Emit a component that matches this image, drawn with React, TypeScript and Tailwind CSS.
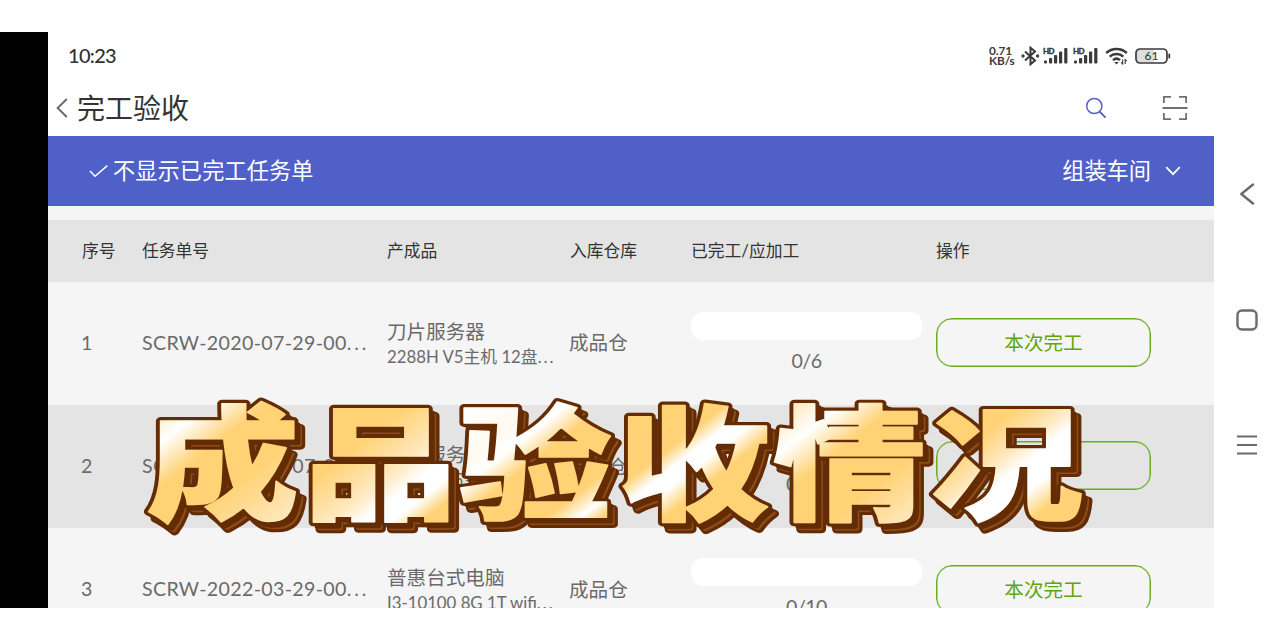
type Task = {
  id: number;
  code: string;
  product: string;
  spec: string;
  warehouse: string;
  progress: string;
};

const COLUMNS = ["序号", "任务单号", "产成品", "入库仓库", "已完工/应加工", "操作"];

const TASKS: Task[] = [
  {
    id: 1,
    code: "SCRW-2020-07-29-00",
    product: "刀片服务器",
    spec: "2288H V5主机 12盘",
    warehouse: "成品仓",
    progress: "0/6",
  },
  {
    id: 2,
    code: "SCRW-2022-01-07-00",
    product: "刀片服务器",
    spec: "2288H V5主机 12盘",
    warehouse: "成品仓",
    progress: "0/10",
  },
  {
    id: 3,
    code: "SCRW-2022-03-29-00",
    product: "普惠台式电脑",
    spec: "I3-10100 8G 1T wifi",
    warehouse: "成品仓",
    progress: "0/10",
  },
];

const GOLD = "#ffd275";
const PALE = "#ffe9c0";
const WHITE = "#ffffff";

type Glyph = { char: string; x: number; stops: [number, string][] };

const CAPTION: Glyph[] = [
  { char: "成", x: 146, stops: [[0.05, PALE], [0.2, WHITE], [0.4, GOLD], [0.65, GOLD], [1, PALE]] },
  { char: "品", x: 304, stops: [[0, GOLD], [0.35, GOLD], [0.6, PALE], [0.72, WHITE], [0.82, WHITE], [0.93, GOLD]] },
  { char: "验", x: 459, stops: [[0, WHITE], [0.25, "#fffaf0"], [0.36, WHITE], [0.5, GOLD], [0.8, GOLD], [0.92, WHITE], [1, GOLD]] },
  { char: "收", x: 617, stops: [[0, GOLD], [0.36, GOLD], [0.46, WHITE], [0.54, WHITE], [0.66, GOLD], [1, GOLD]] },
  { char: "情", x: 773, stops: [[0.05, PALE], [0.22, WHITE], [0.42, GOLD], [0.7, GOLD], [1, PALE]] },
  { char: "况", x: 930, stops: [[0, GOLD], [0.3, GOLD], [0.48, PALE], [0.58, WHITE], [0.72, WHITE], [0.86, GOLD]] },
];

const GRID =
  "grid grid-cols-[60px_245px_183px_121px_245px_216px] items-center pl-[34px]";

function Signal() {
  return (
    <svg width="26" height="18" viewBox="0 0 26 18" fill="#3a3a3a">
      <text x="0" y="7" fontSize="8" fontWeight="900" stroke="#3a3a3a" strokeWidth="0.3" textLength="11.5">
        HD
      </text>
      <rect x="1" y="13.5" width="3" height="3" rx="1" />
      <rect x="6" y="11" width="3.2" height="5.5" rx="1" />
      <rect x="11" y="8" width="3.2" height="8.5" rx="1" />
      <rect x="16" y="4.5" width="3.2" height="12" rx="1" />
      <rect x="21.2" y="1" width="3.2" height="15.5" rx="1" />
    </svg>
  );
}

function StatusBar() {
  return (
    <div className="flex h-12 items-center justify-between pl-5 pr-[43px]">
      <span className="pb-[2px] text-[20px] font-medium tracking-[-0.7px] text-[#333]">10:23</span>
      <div className="flex items-center text-[#3a3a3a]">
        <div className="w-8 text-[11.8px] font-bold leading-[10px] tracking-[-0.1px]">
          <div>0.71</div>
          <div>KB/s</div>
        </div>
        <svg width="19" height="20" viewBox="0 0 19 20" fill="none" stroke="currentColor" strokeWidth="2">
          <path d="M4 5.5 14 14.5 9.5 18.3V1.7L14 5.5 4 14.5" />
          <circle cx="2" cy="10" r="0.7" />
          <circle cx="16.6" cy="10" r="0.7" />
        </svg>
        <div className="ml-[3px] flex gap-1">
          <Signal />
          <Signal />
        </div>
        <svg className="ml-[6px]" width="24" height="18" viewBox="0 0 24 18" fill="none" stroke="currentColor" strokeWidth="2.5">
          <path d="M1.2 6a15 15 0 0 1 20.6 0" />
          <path d="M4.7 9.7a10 10 0 0 1 13.6 0" />
          <path d="M8 13.1a5.4 5.4 0 0 1 7 0" />
          <path d="m9.2 15 2.3 2.4 2.3-2.4Z" fill="currentColor" stroke="none" />
          <path d="M17.7 12.5v4.5l-1.6-1.6M20.2 17v-4.5l1.6 1.6" strokeWidth="1.1" />
        </svg>
        <svg className="ml-[6px]" width="36" height="16" viewBox="0 0 36 16" fill="none">
          <path d="M5 2h14v12H5a3 3 0 0 1-3-3V5a3 3 0 0 1 3-3Z" fill="#dedede" />
          <rect x="1" y="1" width="31" height="14" rx="4" stroke="currentColor" strokeWidth="1.7" />
          <rect x="33.4" y="5.5" width="1.8" height="5" rx="0.9" fill="currentColor" />
          <text x="16.5" y="12.2" textAnchor="middle" fontSize="12" fontWeight="500" fill="currentColor">
            61
          </text>
        </svg>
      </div>
    </div>
  );
}

function TitleBar() {
  return (
    <div className="flex h-14 items-center pl-2 pr-[26px]">
      <svg width="12" height="20" viewBox="0 0 12 20" fill="none" stroke="#666" strokeWidth="1.8">
        <path d="M10.8 1 1.6 10l9.2 9" />
      </svg>
      <h1 className="ml-[9px] text-[28px] leading-none text-[#333]">完工验收</h1>
      <svg className="ml-auto" width="22" height="22" viewBox="0 0 22 22" fill="none" stroke="#5661c4">
        <circle cx="9.3" cy="9" r="7.6" strokeWidth="1.5" />
        <path d="m14.6 14.6 6 6" strokeWidth="2" />
      </svg>
      <svg className="ml-[55px]" width="26" height="26" viewBox="0 0 26 26" fill="none" stroke="#707070" strokeWidth="1.8">
        <path d="M1.9 8V1.9H9M17 1.9h7.1V8M1.9 18v6.1H9M17 24.1h7.1V18M.5 13h25" />
      </svg>
    </div>
  );
}

function FilterBar() {
  return (
    <div className="flex h-[70px] items-center bg-[#4f60c9] pl-[41px] pr-[33px] text-[22.2px] leading-none text-white">
      <svg width="20" height="14" viewBox="0 0 20 14" fill="none" stroke="currentColor" strokeWidth="1.5">
        <path d="m1 7 5 5.2L18.3 1.6" />
      </svg>
      <span className="ml-1 tracking-[0.1px]">不显示已完工任务单</span>
      <span className="ml-auto">组装车间</span>
      <svg className="ml-[14px]" width="16" height="10" viewBox="0 0 16 10" fill="none" stroke="currentColor" strokeWidth="1.8">
        <path d="m1.2 1.2 6.8 7 6.8-7" />
      </svg>
    </div>
  );
}

function TaskRow({ task }: { task: Task }) {
  return (
    <div
      className={`${GRID} h-[123.2px] shrink-0 text-[19.6px] text-[#6a6a6a] even:bg-[#f5f5f5] odd:bg-[#e4e4e4]`}
    >
      <span className="-ml-px pb-px">{task.id}</span>
      <span className="whitespace-nowrap pb-px tracking-[0.35px]">
        {task.code}
        <span className="tracking-[2.8px]">...</span>
      </span>
      <div className="whitespace-nowrap pt-px">
        <div className="leading-[26px]">{task.product}</div>
        <div className="text-[16.8px] leading-6">
          {task.spec}
          <span className="tracking-[2px]">...</span>
        </div>
      </div>
      <span className="-ml-px">{task.warehouse}</span>
      <div className="w-[231px] text-center">
        <div className="h-7 rounded-xl bg-white" />
        <div className="mt-[7px] leading-7 tracking-[-0.5px]">{task.progress}</div>
      </div>
      <button className="mb-px h-[49px] w-[215px] rounded-[16px] border border-[#69ae1b] pt-px text-[#5fa50c] shadow-[inset_0_0_0_0.5px_#69ae1b]">
        本次完工
      </button>
    </div>
  );
}

function Caption() {
  return (
    <svg
      className="pointer-events-none absolute left-0 top-0"
      width="1280"
      height="640"
      viewBox="0 0 1280 640"
      fontFamily="'Noto Sans CJK SC', sans-serif"
      fontSize="156"
      fontWeight="900"
      strokeLinejoin="round"
    >
      <defs>
        {CAPTION.map(({ char, stops }, i) => (
          <linearGradient key={char} id={`gold${i}`} x1="0.22" y1="0.1" x2="0.78" y2="0.95">
            {stops.map(([offset, color]) => (
              <stop key={offset} offset={offset} stopColor={color} />
            ))}
          </linearGradient>
        ))}
        {CAPTION.map(({ char }, i) => (
          <text key={char} id={`glyph${i}`}>
            {char}
          </text>
        ))}
      </defs>
      {CAPTION.map(({ char, x }, i) => (
        <g key={char} transform={`translate(${x} 509.5) scale(0.98 0.795)`}>
          <use href={`#glyph${i}`} x="7" y="9.5" fill="#642c05" stroke="#642c05" strokeWidth="10" />
          <use href={`#glyph${i}`} x="6" y="8" fill="#8d4d18" stroke="#8d4d18" strokeWidth="5" />
          <use href={`#glyph${i}`} x="4" y="5.5" fill="none" stroke="#642c05" strokeWidth="6" />
          <use href={`#glyph${i}`} fill="#642c05" stroke="#642c05" strokeWidth="10" />
          <text fill={`url(#gold${i})`} stroke={`url(#gold${i})`} strokeWidth="2">
            {char}
          </text>
        </g>
      ))}
    </svg>
  );
}

export default function App() {
  return (
    <div className="relative h-[640px] w-[1280px] overflow-hidden bg-white py-8 font-['Lato','Noto_Sans_CJK_SC',sans-serif]">
      <div className="flex h-[576px]">
        <div className="w-12 bg-black" />
        <main className="flex w-[1166px] flex-col overflow-hidden">
          <StatusBar />
          <TitleBar />
          <FilterBar />
          <div className="flex min-h-0 flex-1 flex-col overflow-hidden bg-[#f5f5f5] pt-[14px]">
            <div className={`${GRID} h-[61.6px] shrink-0 bg-[#e4e4e4] text-[16.8px] text-[#333]`}>
              {COLUMNS.map((name) => (
                <span key={name}>{name}</span>
              ))}
            </div>
            {TASKS.map((task) => (
              <TaskRow key={task.id} task={task} />
            ))}
          </div>
        </main>
        {/* System navigation */}
        <nav className="flex w-[66px] flex-col items-center pt-[151px] text-[#6b6b6b]">
          <svg width="22" height="22" viewBox="0 0 22 22" fill="none" stroke="currentColor" strokeWidth="2.4">
            <path d="M17 1.5 5.3 11 17 20.5" strokeLinecap="round" strokeLinejoin="round" />
          </svg>
          <svg className="mt-[104px]" width="22" height="22" viewBox="0 0 22 22" fill="none" stroke="currentColor" strokeWidth="2.4">
            <rect x="1.5" y="1.5" width="19" height="19" rx="4.5" />
          </svg>
          <svg className="mt-[103px]" width="22" height="22" viewBox="0 0 22 22" fill="none" stroke="currentColor" strokeWidth="2.2">
            <path d="M1 2.5h20M1 11h20M1 19.5h20" />
          </svg>
        </nav>
      </div>
      <Caption />
    </div>
  );
}
